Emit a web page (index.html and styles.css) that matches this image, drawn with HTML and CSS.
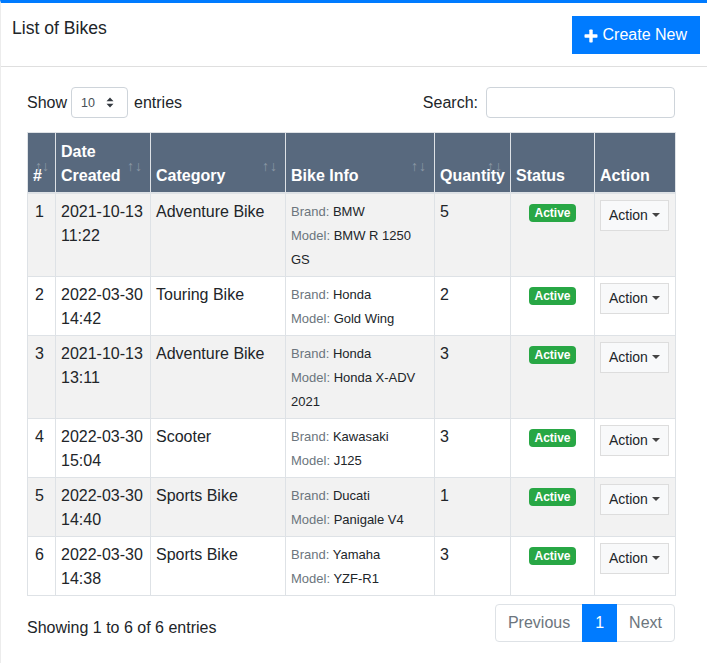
FILE: index.html
```html
<!DOCTYPE html>
<html>
<head>
<meta charset="utf-8">
<title>List of Bikes</title>
<link rel="stylesheet" href="styles.css">
</head>
<body>
<div class="card">
  <div class="card-header">
    <h3 class="card-title">List of Bikes</h3>
    <a class="btn-create" href="#"><svg class="plus" width="14" height="14" viewBox="0 0 14 14"><rect x="5.3" y="0.5" width="3.4" height="13" rx="0.8" fill="#fff"/><rect x="0.5" y="5.3" width="13" height="3.4" rx="0.8" fill="#fff"/></svg>Create New</a>
  </div>
  <div class="card-body">
    <div class="controls">
      <div class="length">Show <span class="select"><span class="sel-val">10</span><svg width="8" height="11" viewBox="0 0 8 11"><path d="M4 0.5 L7.5 4.3 H0.5 Z M4 10.5 L7.5 6.7 H0.5 Z" fill="#343a40"/></svg></span> entries</div>
      <div class="search">Search: <span class="input"></span></div>
    </div>
    <table class="data">
      <colgroup>
        <col class="c-num"><col class="c-date"><col class="c-cat"><col class="c-info"><col class="c-qty"><col class="c-status"><col class="c-action">
      </colgroup>
      <thead>
        <tr>
          <th class="sort first">#</th>
          <th class="sort">Date Created</th>
          <th class="sort">Category</th>
          <th class="sort">Bike Info</th>
          <th class="sort">Quantity</th>
          <th>Status</th>
          <th>Action</th>
        </tr>
      </thead>
      <tbody>
        <tr class="odd">
          <td class="num">1</td>
          <td>2021-10-13 11:22</td>
          <td>Adventure Bike</td>
          <td class="info"><span class="line"><span class="lbl">Brand:</span> BMW</span><span class="line"><span class="lbl">Model:</span> BMW R 1250 GS</span></td>
          <td>5</td>
          <td class="status"><span class="badge">Active</span></td>
          <td><span class="btn-action">Action</span></td>
        </tr>
        <tr>
          <td class="num">2</td>
          <td>2022-03-30 14:42</td>
          <td>Touring Bike</td>
          <td class="info"><span class="line"><span class="lbl">Brand:</span> Honda</span><span class="line"><span class="lbl">Model:</span> Gold Wing</span></td>
          <td>2</td>
          <td class="status"><span class="badge">Active</span></td>
          <td><span class="btn-action">Action</span></td>
        </tr>
        <tr class="odd">
          <td class="num">3</td>
          <td>2021-10-13 13:11</td>
          <td>Adventure Bike</td>
          <td class="info"><span class="line"><span class="lbl">Brand:</span> Honda</span><span class="line"><span class="lbl">Model:</span> Honda X-ADV 2021</span></td>
          <td>3</td>
          <td class="status"><span class="badge">Active</span></td>
          <td><span class="btn-action">Action</span></td>
        </tr>
        <tr>
          <td class="num">4</td>
          <td>2022-03-30 15:04</td>
          <td>Scooter</td>
          <td class="info"><span class="line"><span class="lbl">Brand:</span> Kawasaki</span><span class="line"><span class="lbl">Model:</span> J125</span></td>
          <td>3</td>
          <td class="status"><span class="badge">Active</span></td>
          <td><span class="btn-action">Action</span></td>
        </tr>
        <tr class="odd">
          <td class="num">5</td>
          <td>2022-03-30 14:40</td>
          <td>Sports Bike</td>
          <td class="info"><span class="line"><span class="lbl">Brand:</span> Ducati</span><span class="line"><span class="lbl">Model:</span> Panigale V4</span></td>
          <td>1</td>
          <td class="status"><span class="badge">Active</span></td>
          <td><span class="btn-action">Action</span></td>
        </tr>
        <tr>
          <td class="num">6</td>
          <td>2022-03-30 14:38</td>
          <td>Sports Bike</td>
          <td class="info"><span class="line"><span class="lbl">Brand:</span> Yamaha</span><span class="line"><span class="lbl">Model:</span> YZF-R1</span></td>
          <td>3</td>
          <td class="status"><span class="badge">Active</span></td>
          <td><span class="btn-action">Action</span></td>
        </tr>
      </tbody>
    </table>
    <div class="footer">
      <div class="info-text">Showing 1 to 6 of 6 entries</div>
      <ul class="pagination">
        <li class="page disabled first-page">Previous</li>
        <li class="page active">1</li>
        <li class="page disabled last-page">Next</li>
      </ul>
    </div>
  </div>
</div>
</body>
</html>
```

FILE: styles.css
```css
* { box-sizing: border-box; }

html, body {
  margin: 0;
  background: #ffffff;
  font-family: "Liberation Sans", Arial, sans-serif;
  font-size: 16px;
  line-height: 24px;
  color: #212529;
}

.card {
  border-top: 3px solid #007bff;
  border-left: 1px solid #ececec;
  background: #fff;
  min-height: 663px;
}

.card-header {
  display: flex;
  justify-content: space-between;
  align-items: flex-start;
  padding: 13px 7px 12px 11px;
  border-bottom: 1px solid #dfdfdf;
}

.card-title {
  margin: 2px 0 0;
  font-size: 17.6px;
  font-weight: 400;
  line-height: 21px;
  color: #212529;
}

.btn-create {
  display: flex;
  align-items: center;
  gap: 5px;
  height: 38px;
  padding: 0 13px 0 12px;
  background: #007bff;
  color: #fff;
  text-decoration: none;
  font-size: 16px;
  line-height: 24px;
  white-space: nowrap;
}

.plus { display: block; margin-top: 1px; }

.card-body {
  padding: 20px 32px 20px 26px;
}

.controls {
  display: flex;
  justify-content: space-between;
  align-items: center;
  height: 31px;
}

.length, .search {
  display: flex;
  align-items: center;
  white-space: nowrap;
}

.select {
  display: inline-flex;
  align-items: center;
  justify-content: space-between;
  width: 57px;
  height: 31px;
  margin: 0 6px 0 4px;
  padding: 0 13px 0 9px;
  border: 1px solid #ced4da;
  border-radius: 4px;
  font-size: 12.5px;
  color: #495057;
}

.sel-val { line-height: 20px; }

.input {
  display: inline-block;
  width: 189px;
  height: 31px;
  margin-left: 8px;
  border: 1px solid #ced4da;
  border-radius: 4px;
}

.data {
  width: 100%;
  margin-top: 14px;
  border-collapse: collapse;
  table-layout: fixed;
  border: 1px solid #dee2e6;
}

.c-num { width: 28px; }
.c-date { width: 95px; }
.c-cat { width: 135px; }
.c-info { width: 149px; }
.c-qty { width: 76px; }
.c-status { width: 84px; }
.c-action { width: 81px; }

.data th {
  position: relative;
  background: #58697e;
  color: #fff;
  font-weight: 700;
  text-align: left;
  vertical-align: bottom;
  padding: 5px 5px 4px 5px;
  border: 1px solid #dee2e6;
  border-bottom: 2px solid #dee2e6;
  white-space: normal;
  height: 60px;
}

.data th.sort::before,
.data th.sort::after {
  position: absolute;
  bottom: 15px;
  font-size: 14px;
  line-height: 21px;
  font-weight: 400;
  opacity: 0.3;
}

.data th.sort::before { content: "\2191"; right: 16px; }
.data th.sort::after { content: "\2193"; right: 8px; }
.data th.first::before { right: 13px; }
.data th.first::after { right: 6px; }

.data td {
  vertical-align: top;
  padding: 6px 5px 4px;
  border: 1px solid #dee2e6;
}

.data tr.odd td { background: #f2f2f2; }

.data td.num { padding-left: 7px; }

.data td.info {
  font-size: 13px;
  line-height: 24px;
}

.line { display: block; }

.lbl { color: #6c757d; }

.data td.status { text-align: center; }

.badge {
  display: inline-block;
  padding: 3px 5px;
  font-size: 12px;
  font-weight: 700;
  line-height: 12px;
  color: #fff;
  background: #28a745;
  border-radius: 4px;
  vertical-align: 0;
}

.btn-action {
  display: inline-flex;
  align-items: center;
  height: 31px;
  padding: 0 8px;
  border: 1px solid #dddddd;
  background: #f8f9fa;
  font-size: 14px;
  line-height: 21px;
  color: #212529;
}

.btn-action::after {
  content: "";
  margin-left: 4px;
  margin-top: -1px;
  border-top: 4px solid #444;
  border-left: 4px solid transparent;
  border-right: 4px solid transparent;
}

.footer {
  display: flex;
  justify-content: space-between;
  align-items: flex-start;
  margin-top: 8px;
}

.info-text {
  padding-top: 12px;
  white-space: nowrap;
}

.pagination {
  display: flex;
  list-style: none;
  margin: 0;
  padding: 0;
}

.page {
  padding: 8px 12px;
  line-height: 20px;
  border: 1px solid #dee2e6;
  margin-left: -1px;
  color: #6c757d;
  background: #fff;
}

.page.first-page { border-radius: 4px 0 0 4px; margin-left: 0; }
.page.last-page { border-radius: 0 4px 4px 0; }

.page.active {
  background: #007bff;
  border-color: #007bff;
  color: #fff;
  position: relative;
  z-index: 1;
}
```
